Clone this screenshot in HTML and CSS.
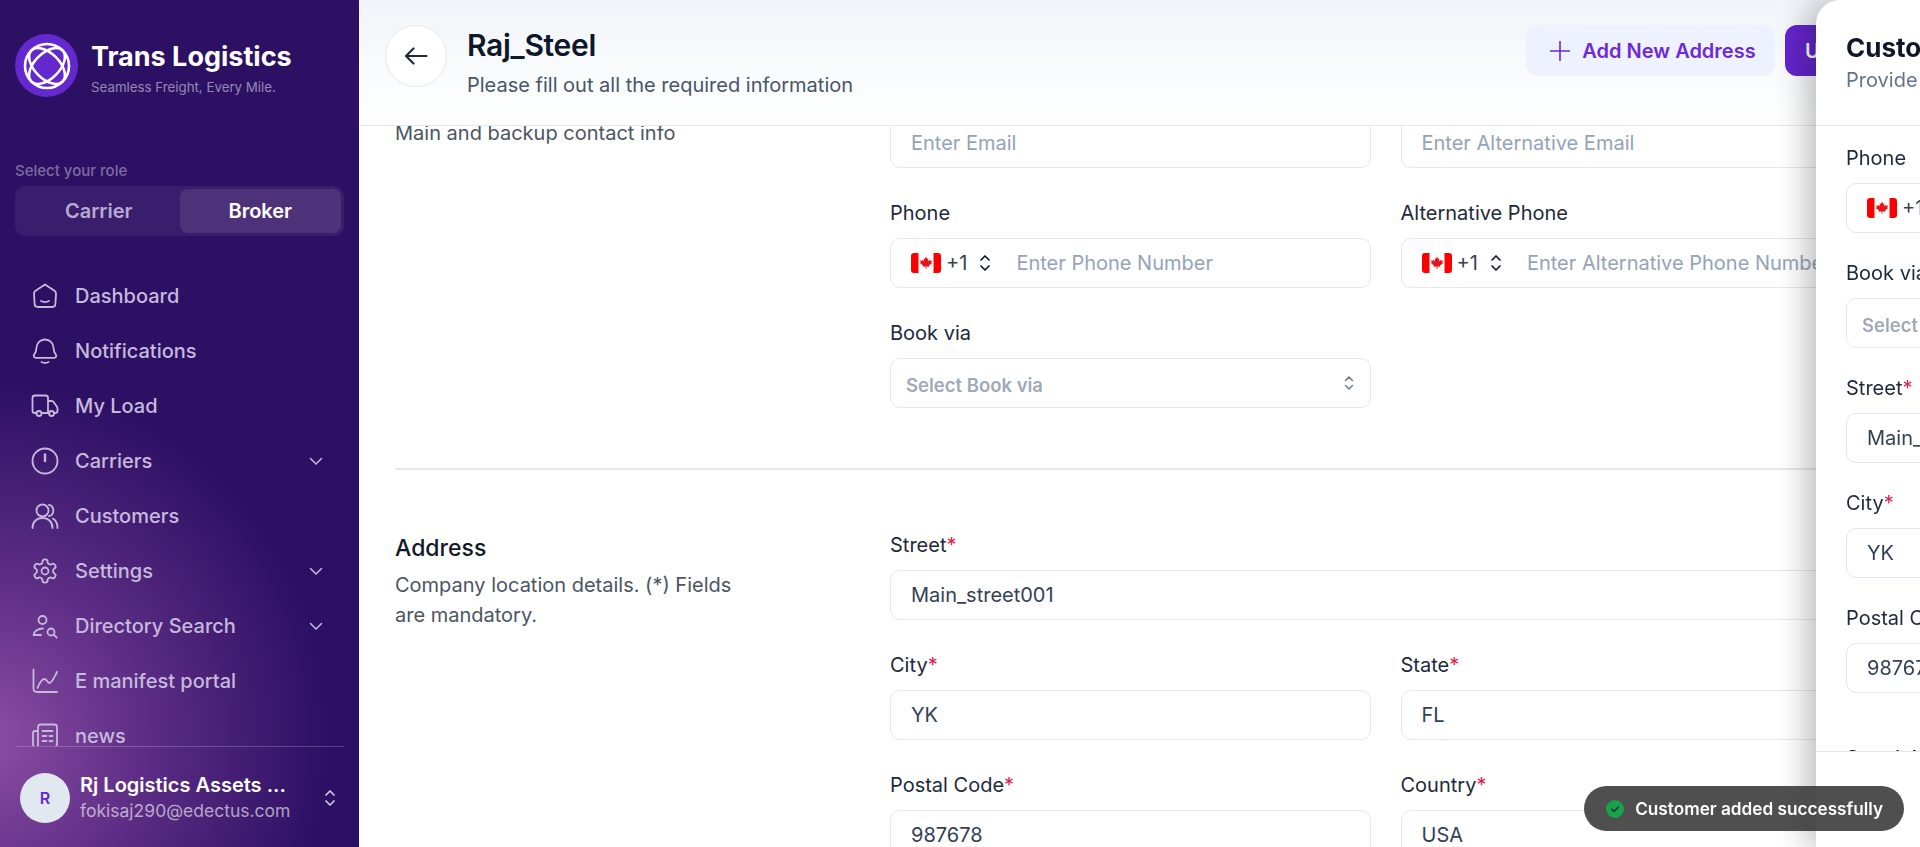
FILE: index.html
```html
<!DOCTYPE html>
<html lang="en">
<head>
    <meta charset="UTF-8">
    <meta name="viewport" content="width=device-width, initial-scale=1.0">
    <title>Raj_Steel</title>
    <link rel="stylesheet" href="styles.css">
</head>
<body>
    <svg class="defs" width="0" height="0">
        <symbol id="flag" viewBox="0 0 30 20">
            <rect width="30" height="20" rx="3" fill="#ff0000"/>
            <rect x="7.5" width="15" height="20" fill="#ffffff"/>
            <polygon fill="#e8131b" points="15,3.5 16.2,6 17.3,5.2 16.9,8.5 18.5,6.8 19,7.8 21,7.4 20.3,9.7 21,10.2 18,12.6 18.3,13.8 15.4,13.4 15.4,16 14.6,16 14.6,13.4 11.7,13.8 12,12.6 9,10.2 9.7,9.7 9,7.4 11,7.8 11.5,6.8 13.1,8.5 12.7,5.2 13.8,6"/>
        </symbol>
        <symbol id="updown" viewBox="0 0 14 20">
            <path d="M3 7l4-4 4 4M3 13l4 4 4-4" fill="none" stroke="currentColor" stroke-width="1.7" stroke-linecap="round" stroke-linejoin="round"/>
        </symbol>
        <symbol id="chev" viewBox="0 0 18 18">
            <path d="M3.500 6.500L9 12l5.500-5.500" fill="none" stroke="currentColor" stroke-width="1.500" stroke-linecap="round" stroke-linejoin="round"/>
        </symbol>
    </svg>

    <div class="app">
        <aside class="sidebar">
            <div class="brand">
                <div class="brand-logo">
                    <svg width="50" height="50" viewBox="0 0 50 50" fill="none" stroke="#ffffff" stroke-width="2.600">
                        <circle cx="25" cy="25" r="22"/>
                        <ellipse cx="25" cy="25" rx="22" ry="12.500" transform="rotate(45 25 25)"/>
                        <ellipse cx="25" cy="25" rx="22" ry="12.500" transform="rotate(-45 25 25)"/>
                    </svg>
                </div>
                <div class="brand-text">
                    <div class="brand-name">Trans Logistics</div>
                    <div class="brand-tag">Seamless Freight, Every Mile.</div>
                </div>
            </div>

            <div class="role-label">Select your role</div>
            <div class="role-switch">
                <div class="role">Carrier</div>
                <div class="role active">Broker</div>
            </div>

            <nav class="nav">
                <a class="nav-item">
                    <svg class="nav-icon" viewBox="0 0 28 28"><path d="M14 2.500l9.500 6.300c1 .7 1.500 1.600 1.500 2.800l-.6 10.400c-.1 1.800-1.300 3-3.100 3H6.700c-1.800 0-3-1.200-3.100-3L3 11.600c0-1.200.5-2.100 1.500-2.800z"/><path d="M10 19c2.500 1.300 5.500 1.300 8 0"/></svg>
                    <span>Dashboard</span>
                </a>
                <a class="nav-item">
                    <svg class="nav-icon" viewBox="0 0 28 28"><path d="M14 2.500c-4.800 0-8.300 3.500-8.500 8.200-.1 3-.5 4.500-2.300 6.800-1 1.400-.3 3.300 1.500 3.300h18.600c1.800 0 2.500-1.900 1.500-3.300-1.800-2.300-2.200-3.800-2.300-6.800-.2-4.700-3.700-8.200-8.500-8.200z"/><path d="M10.500 25c2.200 1.200 4.800 1.200 7 0"/></svg>
                    <span>Notifications</span>
                </a>
                <a class="nav-item">
                    <svg class="nav-icon" viewBox="0 0 28 28"><path d="M5.500 21H3.800C2.300 21 1.500 20 1.500 18.700V6c0-1.500 1-2.500 2.500-2.500h10.500c1.500 0 2.500 1 2.500 2.500v15h-6M17 9h3.500c1 0 1.700.4 2.300 1.200l3 4.300c.5.700.7 1.300.7 2.100v2.200c0 1.300-.8 2.200-2.200 2.200H23M17 21h1.500"/><circle cx="8" cy="21.500" r="2.500"/><circle cx="20.500" cy="21.500" r="2.500"/></svg>
                    <span>My Load</span>
                </a>
                <a class="nav-item">
                    <svg class="nav-icon" viewBox="0 0 28 28"><circle cx="14" cy="14" r="12.500"/><path d="M14 7.500v6.500" stroke-width="2.400"/></svg>
                    <span>Carriers</span>
                    <svg class="chev"><use href="#chev"/></svg>
                </a>
                <a class="nav-item">
                    <svg class="nav-icon" viewBox="0 0 28 28"><circle cx="11.500" cy="8.500" r="6"/><path d="M1.500 26c0-6 4-10 10-10s10 4 10 10"/><path d="M18 2.800c2.600.6 4.300 3 4.300 5.700s-1.700 5-4.300 5.700M22 16.500c2.800 1.700 4.500 5 4.500 9.500"/></svg>
                    <span>Customers</span>
                </a>
                <a class="nav-item">
                    <svg class="nav-icon gear" viewBox="0 0 24 24"><path d="M12.220 2h-.44a2 2 0 0 0-2 2v.18a2 2 0 0 1-1 1.730l-.43.25a2 2 0 0 1-2 0l-.15-.08a2 2 0 0 0-2.730.73l-.22.38a2 2 0 0 0 .73 2.730l.15.1a2 2 0 0 1 1 1.720v.51a2 2 0 0 1-1 1.740l-.15.09a2 2 0 0 0-.73 2.730l.22.38a2 2 0 0 0 2.730.73l.15-.08a2 2 0 0 1 2 0l.43.25a2 2 0 0 1 1 1.730V20a2 2 0 0 0 2 2h.44a2 2 0 0 0 2-2v-.18a2 2 0 0 1 1-1.730l.43-.25a2 2 0 0 1 2 0l.15.08a2 2 0 0 0 2.730-.73l.22-.39a2 2 0 0 0-.73-2.730l-.15-.08a2 2 0 0 1-1-1.740v-.5a2 2 0 0 1 1-1.740l.15-.09a2 2 0 0 0 .73-2.730l-.22-.38a2 2 0 0 0-2.730-.73l-.15.08a2 2 0 0 1-2 0l-.43-.25a2 2 0 0 1-1-1.730V4a2 2 0 0 0-2-2z"/><circle cx="12" cy="12" r="3"/></svg>
                    <span>Settings</span>
                    <svg class="chev"><use href="#chev"/></svg>
                </a>
                <a class="nav-item">
                    <svg class="nav-icon" viewBox="0 0 28 28"><circle cx="11.500" cy="8" r="4"/><path d="M2.500 23c.3-3.500 4-6.500 9.500-6.500M2.500 23h7.500"/><circle cx="20" cy="20" r="3.500"/><path d="M22.700 22.700l3 3"/></svg>
                    <span>Directory Search</span>
                    <svg class="chev"><use href="#chev"/></svg>
                </a>
                <a class="nav-item">
                    <svg class="nav-icon" viewBox="0 0 28 28"><path d="M2.500 2.500v19c0 2 1 3.500 3.500 3.500h20"/><path d="M6.500 21c2-5 4-9 7-9 2.500 0 3 4 5 4 2.500 0 5-6 7.500-11"/></svg>
                    <span>E manifest portal</span>
                </a>
                <a class="nav-item">
                    <svg class="nav-icon" viewBox="0 0 28 28"><path d="M7 25V5c0-1.500 1-2.500 2.500-2.500h14c1.500 0 2.500 1 2.500 2.500v17c0 2-1 3-3 3H4.500C2.800 25 2 24 2 22.500V11c0-1.200.8-2 2-2h3"/><path d="M11.500 9h10M11.500 14h4M18.500 14h3M11.500 19h4M18.500 19h3"/></svg>
                    <span>news</span>
                </a>
            </nav>

            <div class="account">
                <div class="avatar">R</div>
                <div class="account-info">
                    <div class="account-name">Rj Logistics Assets ...</div>
                    <div class="account-mail">fokisaj290@edectus.com</div>
                </div>
                <svg class="account-arrows"><use href="#updown"/></svg>
            </div>
        </aside>

        <main class="main">
            <header class="topbar">
                <button class="back">
                    <svg width="24" height="24" viewBox="0 0 24 24" fill="none" stroke="#1e293b" stroke-width="2.200" stroke-linecap="round" stroke-linejoin="round"><path d="M22.500 12H2M9.500 4.500L2 12l7.500 7.500"/></svg>
                </button>
                <div class="title-wrap">
                    <h1>Raj_Steel</h1>
                    <p>Please fill out all the required information</p>
                </div>
                <div class="actions">
                    <button class="btn-light">
                        <svg width="20" height="20" viewBox="0 0 20 20" fill="none" stroke="currentColor" stroke-width="1.600" stroke-linecap="round"><path d="M10 .5v19M.5 10h19"/></svg>
                        Add New Address
                    </button>
                    <button class="btn-primary">Update</button>
                </div>
            </header>

            <div class="scroll">
                <section class="section contact">
                    <div class="section-info">
                        <h3>Contact</h3>
                        <p>Main and backup contact info</p>
                    </div>
                    <div class="fields">
                        <div class="field">
                            <label>Email</label>
                            <div class="input placeholder">Enter Email</div>
                        </div>
                        <div class="field">
                            <label>Alternative Email</label>
                            <div class="input placeholder">Enter Alternative Email</div>
                        </div>
                        <div class="field">
                            <label>Phone</label>
                            <div class="input phone">
                                <svg class="flag"><use href="#flag"/></svg>
                                <span class="code">+1</span>
                                <svg class="arrows"><use href="#updown"/></svg>
                                <span class="placeholder">Enter Phone Number</span>
                            </div>
                        </div>
                        <div class="field">
                            <label>Alternative Phone</label>
                            <div class="input phone">
                                <svg class="flag"><use href="#flag"/></svg>
                                <span class="code">+1</span>
                                <svg class="arrows"><use href="#updown"/></svg>
                                <span class="placeholder">Enter Alternative Phone Number</span>
                            </div>
                        </div>
                        <div class="field">
                            <label>Book via</label>
                            <div class="input select">
                                <span>Select Book via</span>
                                <svg class="select-arrows"><use href="#updown"/></svg>
                            </div>
                        </div>
                    </div>
                </section>

                <section class="section">
                    <div class="section-info">
                        <h3>Address</h3>
                        <p>Company location details. (*) Fields are mandatory.</p>
                    </div>
                    <div class="fields">
                        <div class="field wide">
                            <label>Street<em>*</em></label>
                            <div class="input">Main_street001</div>
                        </div>
                        <div class="field">
                            <label>City<em>*</em></label>
                            <div class="input">YK</div>
                        </div>
                        <div class="field">
                            <label>State<em>*</em></label>
                            <div class="input">FL</div>
                        </div>
                        <div class="field">
                            <label>Postal Code<em>*</em></label>
                            <div class="input">987678</div>
                        </div>
                        <div class="field">
                            <label>Country<em>*</em></label>
                            <div class="input">USA</div>
                        </div>
                    </div>
                </section>
            </div>
        </main>
    </div>

    <aside class="panel">
        <div class="panel-head">
            <h2>Customer Details</h2>
            <p>Provide customer information</p>
        </div>
        <div class="panel-body">
            <div class="field">
                <label>Phone</label>
                <div class="input phone">
                    <svg class="flag"><use href="#flag"/></svg>
                    <span class="code">+1</span>
                    <svg class="arrows"><use href="#updown"/></svg>
                    <span class="placeholder">Enter Phone Number</span>
                </div>
            </div>
            <div class="field">
                <label>Book via</label>
                <div class="input select"><span>Select Book via</span></div>
            </div>
            <div class="field">
                <label>Street<em>*</em></label>
                <div class="input">Main_street001</div>
            </div>
            <div class="field">
                <label>City<em>*</em></label>
                <div class="input">YK</div>
            </div>
            <div class="field">
                <label>Postal Code<em>*</em></label>
                <div class="input">987678</div>
            </div>
            <h3 class="panel-next">Special Instructions</h3>
        </div>
        <div class="panel-foot"></div>
    </aside>

    <div class="toast">
        <svg width="18" height="18" viewBox="0 0 18 18"><circle cx="9" cy="9" r="9" fill="#16a34a"/><path d="M5.800 9.300l2.200 2.200 4.200-4.400" fill="none" stroke="#27323a" stroke-width="1.600" stroke-linecap="round" stroke-linejoin="round"/></svg>
        <span>Customer added successfully</span>
    </div>
</body>
</html>
```

FILE: styles.css
```css
* {
    box-sizing: border-box;
}
html, body {
    height: 100%;
}
body {
    margin: 0;
    overflow: hidden;
    font-family: Inter, "Noto Sans", sans-serif;
    color: #1e293b;
    background-color: #fff;
}
.defs {
    position: absolute;
}
.app {
    display: flex;
    height: 100%;
}

/* sidebar */
.sidebar {
    width: 359px;
    flex-shrink: 0;
    display: flex;
    flex-direction: column;
    padding: 34px 15px 0 15px;
    background-color: #2c1063;
    background-image: radial-gradient(ellipse 340px 360px at -10px 740px, #8b4ea3 0%, rgba(110, 55, 145, 0.75) 45%, rgba(44, 16, 99, 0) 100%);
}
.brand {
    display: flex;
    align-items: center;
    gap: 13px;
}
.brand-logo {
    width: 63px;
    height: 63px;
    border-radius: 50%;
    background-color: #6428cf;
    display: flex;
    align-items: center;
    justify-content: center;
    flex-shrink: 0;
}
.brand-text {
    padding-top: 6px;
}
.brand-name {
    font-size: 27px;
    font-weight: 700;
    line-height: 32px;
    color: #fff;
}
.brand-tag {
    font-size: 13.300px;
    line-height: 20px;
    margin-top: 4px;
    color: rgba(255, 255, 255, 0.5);
}
.role-label {
    margin-top: 64px;
    font-size: 15px;
    font-weight: 500;
    line-height: 20px;
    color: rgba(255, 255, 255, 0.4);
}
.role-switch {
    display: flex;
    margin-top: 5px;
    height: 50px;
    padding: 3px;
    border-radius: 10px;
    background-color: rgba(255, 255, 255, 0.06);
}
.role {
    flex: 1;
    display: flex;
    align-items: center;
    justify-content: center;
    font-size: 20px;
    font-weight: 600;
    color: #b8aad2;
    border-radius: 8px;
}
.role.active {
    background-color: #4d3179;
    color: #fff;
}
.nav {
    flex: 1;
    min-height: 0;
    overflow: hidden;
    margin-top: 32px;
    padding: 0 19px 0 16px;
}
.nav-item {
    display: flex;
    align-items: center;
    height: 55px;
    gap: 16px;
    font-size: 20px;
    font-weight: 500;
    color: #c6b9dc;
}
.nav-item span {
    flex: 1;
}
.nav-icon {
    width: 28px;
    height: 28px;
    flex-shrink: 0;
    fill: none;
    stroke: #c6b9dc;
    stroke-width: 1.800;
    stroke-linecap: round;
    stroke-linejoin: round;
}
.nav-icon.gear {
    stroke-width: 1.550;
}
.chev {
    width: 18px;
    height: 18px;
    flex-shrink: 0;
}
.account {
    display: flex;
    align-items: center;
    gap: 10px;
    flex-shrink: 0;
    height: 101px;
    padding: 1px 0 0 5px;
    border-top: 1px solid rgba(255, 255, 255, 0.2);
}
.avatar {
    width: 50px;
    height: 50px;
    border-radius: 50%;
    background-color: #e2e8f0;
    color: #6428cf;
    font-size: 16px;
    font-weight: 600;
    display: flex;
    align-items: center;
    justify-content: center;
    flex-shrink: 0;
}
.account-info {
    flex: 1;
    min-width: 0;
}
.account-name {
    font-size: 20px;
    font-weight: 600;
    line-height: 26px;
    color: #fff;
    white-space: nowrap;
}
.account-mail {
    font-size: 17.500px;
    line-height: 26px;
    color: rgba(255, 255, 255, 0.6);
    white-space: nowrap;
}
.account-arrows {
    width: 14px;
    height: 20px;
    margin-right: 7px;
    flex-shrink: 0;
    color: #d6cde6;
}

/* main */
.main {
    flex: 1;
    min-width: 0;
    display: flex;
    flex-direction: column;
}
.topbar {
    height: 126px;
    flex-shrink: 0;
    display: flex;
    align-items: flex-start;
    padding: 25px 0 0 26px;
    background: linear-gradient(#f1f5f9, #ffffff);
    border-bottom: 1px solid #e5e7eb;
}
.back {
    width: 62px;
    height: 62px;
    border-radius: 50%;
    border: 1px solid #e2e8f0;
    background-color: #fff;
    display: flex;
    align-items: center;
    justify-content: center;
    padding: 0;
    flex-shrink: 0;
}
.title-wrap {
    margin-left: 20px;
}
.title-wrap h1 {
    margin: 0;
    font-size: 30px;
    font-weight: 600;
    line-height: 40px;
    color: #0f172a;
    letter-spacing: -0.3px;
}
.title-wrap p {
    margin: 6px 0 0;
    font-size: 20px;
    line-height: 28px;
    color: #475569;
}
.actions {
    margin-left: auto;
    display: flex;
    gap: 10px;
}
.btn-light, .btn-primary {
    height: 51px;
    border: 0;
    border-radius: 12px;
    font-family: inherit;
    font-size: 20px;
    font-weight: 600;
    display: flex;
    align-items: center;
    white-space: nowrap;
}
.btn-light {
    width: 249px;
    justify-content: center;
    gap: 12px;
    padding: 0 0 0 5px;
    background-color: #eef2ff;
    color: #6d28d9;
}
.btn-primary {
    width: 135px;
    padding: 0 20px;
    background-color: #6425cc;
    color: #fff;
}
.scroll {
    flex: 1;
    min-height: 0;
    overflow: hidden;
    padding: 0 39px 0 36px;
}
.section {
    display: flex;
    padding: 62px 0 60px;
    border-bottom: 2px solid #e5e7eb;
}
.section.contact {
    margin-top: -46px;
    padding-top: 0;
}
.section-info {
    width: 495px;
    flex-shrink: 0;
    padding-top: 2px;
}
.section-info h3 {
    margin: 0;
    font-size: 23px;
    font-weight: 500;
    line-height: 28px;
    color: #111827;
}
.section-info p {
    margin: 8px 0 0;
    max-width: 350px;
    font-size: 20px;
    line-height: 30px;
    color: #4b5563;
}
.fields {
    flex: 1;
    min-width: 0;
    display: grid;
    grid-template-columns: 1fr 1fr;
    gap: 32px 30px;
}
.wide {
    grid-column: span 2;
}
.field label {
    display: block;
    font-size: 20px;
    line-height: 26px;
    margin-bottom: 12px;
    color: #1e293b;
}
.field em {
    font-style: normal;
    color: #e11d48;
}
.input {
    height: 50px;
    display: flex;
    align-items: center;
    padding: 0 20px;
    border: 1px solid #e2e8f0;
    border-radius: 10px;
    background-color: #fff;
    font-size: 20px;
    color: #334155;
    white-space: nowrap;
    overflow: hidden;
}
.placeholder {
    color: #94a3b8;
}
.flag {
    width: 30px;
    height: 20px;
    flex-shrink: 0;
}
.code {
    margin-left: 5px;
    color: #374151;
}
.arrows {
    width: 14px;
    height: 20px;
    margin: 0 24px 0 11px;
    flex-shrink: 0;
    color: #111827;
}
.select {
    justify-content: space-between;
    padding: 3px 15px 0 15px;
    font-size: 18.500px;
    font-weight: 600;
    color: #a1a9b8;
}
.select-arrows {
    width: 12px;
    height: 18px;
    margin-top: -3px;
    color: #6b7280;
}

/* slide-over panel, runs past the right edge of the window */
.panel {
    position: fixed;
    top: 0;
    bottom: 0;
    left: 1816px;
    width: 640px;
    display: flex;
    flex-direction: column;
    background-color: #fff;
    border-top-left-radius: 24px;
    box-shadow: -10px 0 30px rgba(0, 0, 0, 0.25);
}
.panel-head {
    height: 126px;
    flex-shrink: 0;
    padding: 32px 30px 0;
    border-bottom: 1px solid #e5e7eb;
}
.panel-head h2 {
    margin: 0;
    font-size: 26px;
    font-weight: 700;
    line-height: 32px;
    color: #0f172a;
}
.panel-head p {
    margin: 2px 0 0;
    font-size: 20px;
    line-height: 28px;
    color: #64748b;
}
.panel-body {
    flex: 1;
    min-height: 0;
    overflow: hidden;
    padding: 21px 30px 0;
}
.panel-body .field {
    margin-bottom: 29px;
}
.panel-body .field label {
    line-height: 22px;
    margin-bottom: 14px;
}
.panel-next {
    margin: 51px 0 0;
    font-size: 20px;
    font-weight: 600;
    line-height: 28px;
    color: #111827;
}
.panel-foot {
    height: 96px;
    flex-shrink: 0;
    border-top: 1px solid #e5e7eb;
    background-color: #fff;
}

.toast {
    position: fixed;
    right: 16px;
    bottom: 16px;
    height: 45px;
    display: flex;
    align-items: center;
    gap: 11px;
    padding: 0 21px 0 22px;
    border-radius: 23px;
    background-color: rgba(60, 60, 60, 0.9);
    color: #fff;
    font-size: 17.200px;
    font-weight: 600;
    white-space: nowrap;
}
```
